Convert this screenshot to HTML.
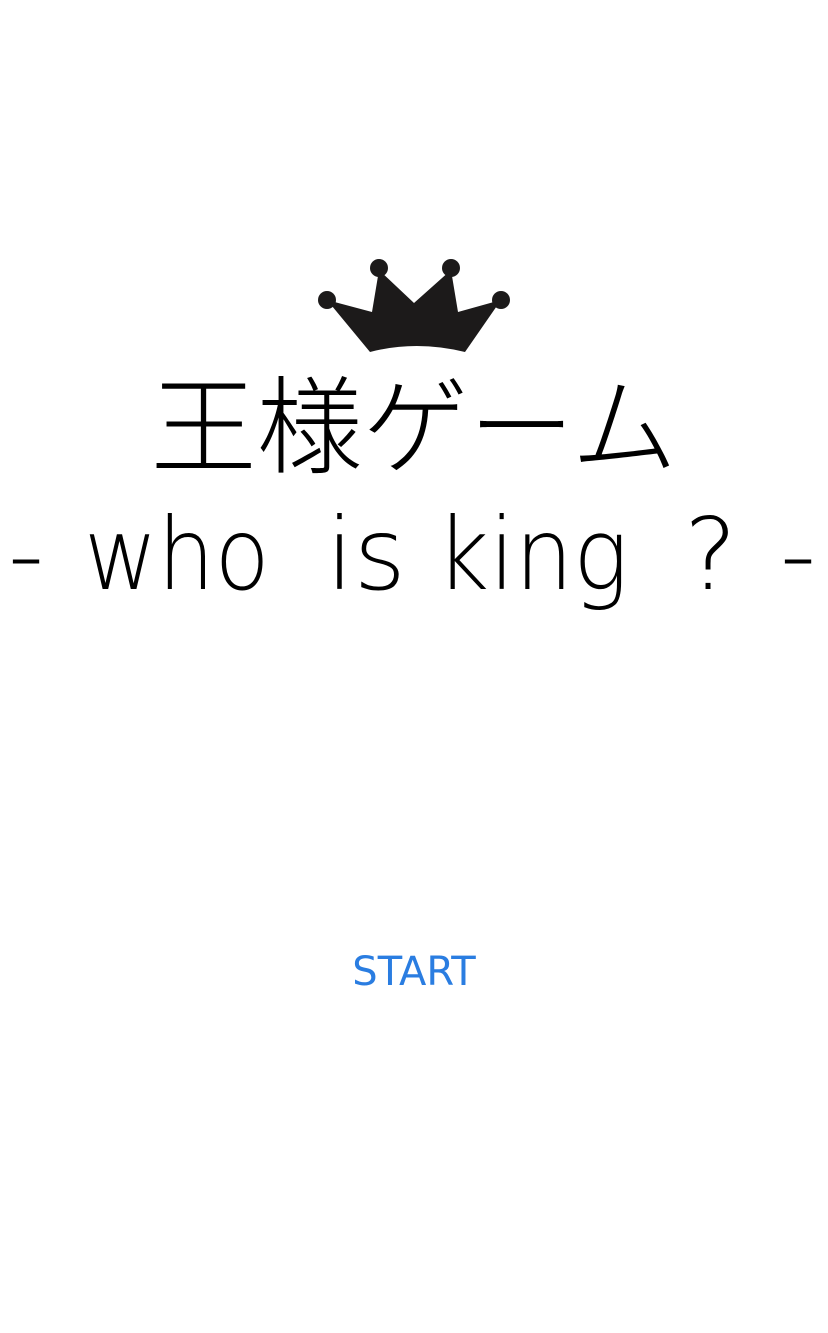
<!DOCTYPE html>
<html><head><meta charset="utf-8"><style>
html,body{margin:0;padding:0;background:#fff;}
body{width:828px;height:1333px;position:relative;overflow:hidden;}
.t{position:absolute;white-space:nowrap;line-height:1;}
.w{font-family:"DejaVu Sans","Liberation Sans",sans-serif;font-weight:200;font-size:100px;top:505px;color:#000;}
</style></head><body>
<svg style="position:absolute;left:0;top:0" width="828" height="400">
<path d="M327,300 L372,312 L379,270 L414,303 L451,270 L458,312 L501,300 L465,352 Q416,340 370,352 Z" fill="#1c1a1a"/>
<circle cx="327" cy="300" r="9" fill="#1c1a1a"/>
<circle cx="379" cy="268" r="9" fill="#1c1a1a"/>
<circle cx="451" cy="268" r="9" fill="#1c1a1a"/>
<circle cx="501" cy="300" r="9" fill="#1c1a1a"/>
</svg>
<div class="t" style="left:0;width:828px;text-align:center;top:366px;font-family:'Noto Sans CJK JP',sans-serif;font-weight:300;font-size:106px;color:#000;">王様ゲーム</div>
<div class="t w" style="left:8px;">-</div>
<div class="t w" style="left:84px;transform:scaleX(0.9);transform-origin:left;">who</div>
<div class="t w" style="left:326px;">is</div>
<div class="t w" style="left:436px;transform:scaleX(0.92);transform-origin:left;">king</div>
<div class="t w" style="left:684px;">?</div>
<div class="t w" style="left:780px;">-</div>
<div class="t" style="left:0;width:828px;text-align:center;top:952px;font-family:'DejaVu Sans',sans-serif;font-size:40px;color:#2a7de1;">START</div>
</body></html>
